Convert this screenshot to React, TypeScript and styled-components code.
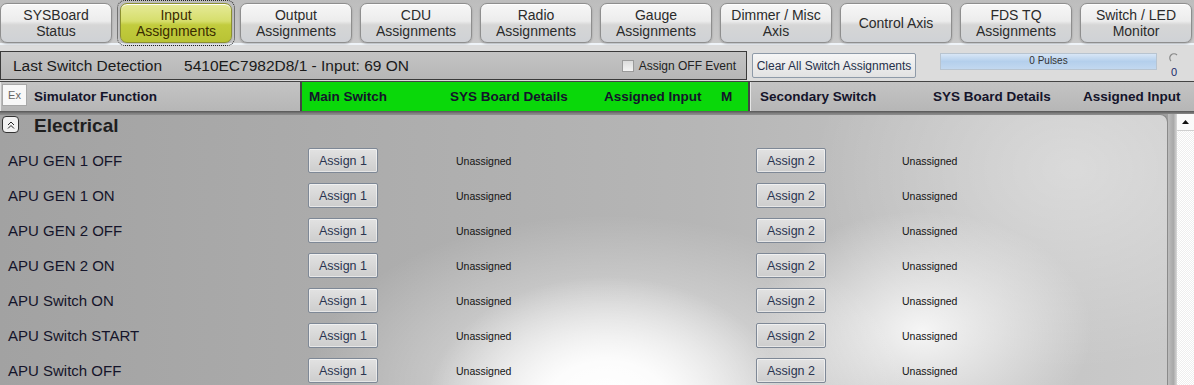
import React from "react";
import styled, { createGlobalStyle, css } from "styled-components";

const Global = createGlobalStyle`
  html, body { margin: 0; padding: 0; }
  body {
    width: 1194px; height: 385px; overflow: hidden;
    background: #d4d4d4;
    font-family: "Liberation Sans", Arial, sans-serif;
    color: #15152a;
  }
`;

const Page = styled.div`
  width: 1194px;
  height: 385px;
  display: flex;
  flex-direction: column;
  overflow: hidden;
`;

const TabStrip = styled.div`
  height: 45px;
  box-sizing: border-box;
  display: flex;
  gap: 8px;
  padding: 3px 0 0 0;
  background: linear-gradient(#bdbdbd, #c9c9c9);
  border-bottom: 2px solid #eef3f8;
`;

const Tab = styled.div<{ $active?: boolean }>`
  width: 112px;
  height: 40px;
  box-sizing: border-box;
  border: 1px solid #8e8e8e;
  border-radius: 7px;
  display: flex;
  align-items: center;
  justify-content: center;
  text-align: center;
  font-size: 14px;
  line-height: 16px;
  color: #2b2b2b;
  box-shadow: 0 1px 2px rgba(0,0,0,0.25), inset 0 1px 0 #ffffff;
  background: linear-gradient(#f7f7f7 0%, #ececec 45%, #d6d6d6 55%, #cfd2d6 100%);
  position: relative;
  ${(p) =>
    p.$active &&
    css`
      color: #3a2c00;
      background: linear-gradient(#e6ea98 0%, #d6de6c 45%, #c2cc3e 55%, #b9c334 100%);
      border-color: #8c9030;
      &::after {
        content: "";
        position: absolute;
        inset: -4px;
        border: 1px dotted #222;
        border-radius: 8px;
      }
    `}
`;

const StatusRow = styled.div`
  height: 36px;
  display: flex;
  align-items: center;
  background: #dcdcdc;
  padding-top: 5px;
  box-sizing: border-box;
`;

const DetectPanel = styled.div`
  width: 747px;
  height: 29px;
  box-sizing: border-box;
  border: 1px solid #3a3a3a;
  background: linear-gradient(#c4c4c4, #b6b6b6);
  display: flex;
  align-items: center;
  padding-left: 12px;
  font-size: 15.5px;
  color: #1a1a1a;
`;

const DetectValue = styled.span`
  margin-left: 22px;
  flex: 1;
`;

const CheckLabel = styled.label`
  display: flex;
  align-items: center;
  gap: 5px;
  font-size: 12px;
  color: #222;
  margin-right: 10px;
`;

const CheckBox = styled.span`
  width: 10px;
  height: 10px;
  border: 1px solid #9a9a9a;
  background: linear-gradient(#dcdcdc, #f4f4f4);
`;

const ClearButton = styled.div`
  margin-left: 5px;
  width: 164px;
  height: 25px;
  box-sizing: border-box;
  border: 1px solid #8e9aa8;
  border-radius: 2px;
  background: linear-gradient(#f6f6f6, #e2e2e2);
  font-size: 12px;
  color: #26304a;
  display: flex;
  align-items: center;
  justify-content: center;
`;

const Progress = styled.div`
  margin-left: 24px;
  width: 217px;
  height: 17px;
  align-self: flex-start;
  margin-top: 3px;
  box-sizing: border-box;
  border: 1px solid #b8c4d0;
  background: linear-gradient(#d8e6f6, #b4cfec 50%, #c2d8f0);
  font-size: 10px;
  color: #333;
  text-align: center;
  line-height: 13px;
`;

const Counter = styled.div`
  margin-left: 12px;
  display: flex;
  flex-direction: column;
  align-items: center;
  font-size: 11px;
  color: #1a2a6a;
  line-height: 12px;
  gap: 3px;
`;

const HeaderRow = styled.div`
  height: 30px;
  display: flex;
  box-sizing: border-box;
  border-top: 1px solid #444;
  background: #444;
  gap: 2px;
`;

const HeadCell = styled.div<{ $w: number; $green?: boolean }>`
  width: ${(p) => p.$w}px;
  flex: ${(p) => (p.$w === 0 ? 1 : "none")};
  display: flex;
  align-items: center;
  font-weight: bold;
  font-size: 13.5px;
  color: #14142a;
  background: ${(p) => (p.$green ? "#0ad80a" : "linear-gradient(#c4c4c4, #b6b6b6)")};
  border-left: ${(p) => (p.$green ? "none" : "1px solid #e6e6e6")};
  box-sizing: border-box;
  position: relative;
`;

const HeadText = styled.span<{ $x: number }>`
  position: absolute;
  left: ${(p) => p.$x}px;
`;

const ExButton = styled.div`
  position: absolute;
  left: 1px;
  top: 2px;
  width: 25px;
  height: 22px;
  box-sizing: border-box;
  border: 1px solid #a8a8a8;
  background: #f8f8f8;
  font-weight: normal;
  font-size: 11px;
  color: #666;
  display: flex;
  align-items: center;
  justify-content: center;
`;

const Shadow = styled.div`
  height: 3px;
  background: linear-gradient(#555, #8a8a8a);
`;

const ListArea = styled.div`
  flex: 1;
  display: flex;
  background: #9e9e9e;
  min-height: 0;
`;

const ListPanel = styled.div`
  flex: 1;
  border-top-right-radius: 8px;
  border-right: 1px solid #8a8a8a;
  border-top: 1px solid #8a8a8a;
  box-sizing: border-box;
  overflow: hidden;
  background:
    radial-gradient(ellipse 180px 130px at 52% 108%, rgba(255,255,255,1) 0%, rgba(255,255,255,0.9) 35%, rgba(255,255,255,0) 100%),
    radial-gradient(ellipse 300px 170px at 52% 100%, rgba(255,255,255,0.7), rgba(255,255,255,0) 100%),
    radial-gradient(ellipse 170px 120px at 79% 80%, rgba(255,255,255,0.85), rgba(255,255,255,0) 100%),
    radial-gradient(ellipse 260px 200px at 92% 20%, rgba(255,255,255,0.35), rgba(255,255,255,0) 100%),
    linear-gradient(90deg, #a2a2a2 0%, #acacac 30%, #b6b6b6 60%, #c4c4c4 85%, #cacaca 100%);
`;

const RightEdge = styled.div`
  width: 9px;
  background: linear-gradient(90deg, #bdbdbd, #a8a8a8 60%, #d8d8d8);
`;

const ScrollBar = styled.div`
  width: 17px;
  background: repeating-conic-gradient(#ffffff 0% 25%, #eeeeee 0% 50%) 0 0 / 2px 2px;
  display: flex;
  flex-direction: column;
`;

const ScrollArrow = styled.div`
  height: 16px;
  background: #fafafa;
  border-bottom: 1px solid #cfcfcf;
  display: flex;
  align-items: center;
  justify-content: center;
`;

const SectionHead = styled.div`
  height: 28px;
  display: flex;
  align-items: flex-start;
  padding: 1px 0 0 2px;
  box-sizing: border-box;
  gap: 15px;
  font-weight: bold;
  font-size: 19px;
  line-height: 19px;
  color: #1e1e1e;
`;

const Collapse = styled.div`
  width: 17px;
  height: 17px;
  box-sizing: border-box;
  border: 1px solid #333;
  border-radius: 4px;
  background: #f2f2f2;
  display: flex;
  align-items: center;
  justify-content: center;
`;

const Row = styled.div`
  height: 35px;
  display: grid;
  grid-template-columns: 308px 148px 300px 146px 1fr;
  align-items: center;
`;

const FuncName = styled.div`
  padding-left: 8px;
  font-size: 15px;
  color: #14142a;
`;

const AssignButton = styled.div`
  width: 70px;
  height: 25px;
  box-sizing: border-box;
  border: 1px solid #7e8896;
  border-radius: 2px;
  background: linear-gradient(#e2e2e2, #cdcdcd);
  box-shadow: inset 0 0 0 1px rgba(255,255,255,0.5);
  display: flex;
  align-items: center;
  justify-content: center;
  font-size: 12.5px;
  color: #2a3450;
`;

const Detail = styled.div`
  font-size: 10.5px;
  color: #141414;
`;

const tabs = [
  ["SYSBoard", "Status"],
  ["Input", "Assignments"],
  ["Output", "Assignments"],
  ["CDU", "Assignments"],
  ["Radio", "Assignments"],
  ["Gauge", "Assignments"],
  ["Dimmer / Misc", "Axis"],
  ["Control Axis"],
  ["FDS TQ", "Assignments"],
  ["Switch / LED", "Monitor"],
];

const functions = [
  "APU GEN 1 OFF",
  "APU GEN 1 ON",
  "APU GEN 2 OFF",
  "APU GEN 2 ON",
  "APU Switch ON",
  "APU Switch START",
  "APU Switch OFF",
];

export default function App() {
  return (
    <>
      <Global />
      <Page>
        <TabStrip>
          {tabs.map((t, i) => (
            <Tab key={i} $active={i === 1}>
              <div>
                {t.map((l, j) => (
                  <div key={j}>{l}</div>
                ))}
              </div>
            </Tab>
          ))}
        </TabStrip>
        <StatusRow>
          <DetectPanel>
            <span>Last Switch Detection</span>
            <DetectValue>5410EC7982D8/1 - Input: 69 ON</DetectValue>
            <CheckLabel>
              <CheckBox />
              Assign OFF Event
            </CheckLabel>
          </DetectPanel>
          <ClearButton>Clear All Switch Assignments</ClearButton>
          <Progress>0 Pulses</Progress>
          <Counter>
            <svg width="10" height="10" viewBox="0 0 10 10">
              <path d="M8 2 A4 4 0 1 0 2 8" fill="none" stroke="#888" strokeWidth="1.2" />
            </svg>
            <span>0</span>
          </Counter>
        </StatusRow>
        <HeaderRow>
          <HeadCell $w={300}>
            <ExButton>Ex</ExButton>
            <HeadText $x={33}>Simulator Function</HeadText>
          </HeadCell>
          <HeadCell $w={446} $green>
            <HeadText $x={7}>Main Switch</HeadText>
            <HeadText $x={148}>SYS Board Details</HeadText>
            <HeadText $x={302}>Assigned Input</HeadText>
            <HeadText $x={419}>M</HeadText>
          </HeadCell>
          <HeadCell $w={0}>
            <HeadText $x={9}>Secondary Switch</HeadText>
            <HeadText $x={182}>SYS Board Details</HeadText>
            <HeadText $x={332}>Assigned Input</HeadText>
          </HeadCell>
        </HeaderRow>
        <Shadow />
        <ListArea>
          <ListPanel>
            <SectionHead>
              <Collapse>
                <svg width="10" height="10" viewBox="0 0 10 10">
                  <path d="M2 5 L5 2 L8 5 M2 8.5 L5 5.5 L8 8.5" fill="none" stroke="#222" strokeWidth="1" />
                </svg>
              </Collapse>
              Electrical
            </SectionHead>
            {functions.map((f) => (
              <Row key={f}>
                <FuncName>{f}</FuncName>
                <AssignButton>Assign 1</AssignButton>
                <Detail>Unassigned</Detail>
                <AssignButton>Assign 2</AssignButton>
                <Detail>Unassigned</Detail>
              </Row>
            ))}
          </ListPanel>
          <RightEdge />
          <ScrollBar>
            <ScrollArrow>
              <svg width="7" height="4" viewBox="0 0 7 4">
                <path d="M0 4 L3.5 0 L7 4 Z" fill="#111" />
              </svg>
            </ScrollArrow>
          </ScrollBar>
        </ListArea>
      </Page>
    </>
  );
}
